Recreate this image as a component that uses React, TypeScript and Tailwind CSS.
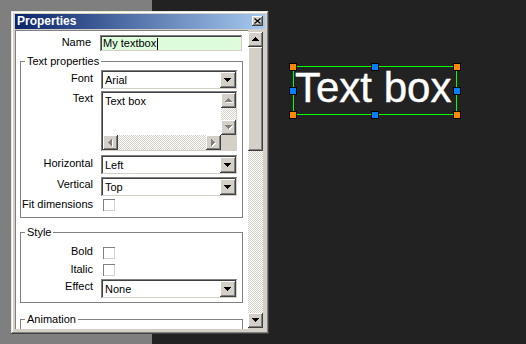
import React from "react";

const raised =
  "bg-[#d4d0c8] shadow-[inset_-1px_-1px_#404040,inset_1px_1px_#ffffff,inset_-2px_-2px_#808080,inset_2px_2px_#d4d0c8]";
const sunken =
  "shadow-[inset_-1px_-1px_#ffffff,inset_1px_1px_#808080,inset_-2px_-2px_#d4d0c8,inset_2px_2px_#404040]";
const checker =
  "[background-image:conic-gradient(#d4d0c8_25%,#ffffff_0_50%,#d4d0c8_0_75%,#ffffff_0)] [background-size:2px_2px]";

type Dir = "up" | "down" | "left" | "right";

function Arrow({ dir, disabled }: { dir: Dir; disabled?: boolean }) {
  const vertical = dir === "up" || dir === "down";
  const w = vertical ? 7 : 4;
  const h = vertical ? 4 : 7;
  const rects = (ox: number, oy: number, fill: string, k: string) =>
    [0, 1, 2, 3].map((i) => {
      if (dir === "down")
        return <rect key={k + i} x={ox + i} y={oy + i} width={7 - 2 * i} height={1} fill={fill} />;
      if (dir === "up")
        return <rect key={k + i} x={ox + 3 - i} y={oy + i} width={1 + 2 * i} height={1} fill={fill} />;
      if (dir === "right")
        return <rect key={k + i} x={ox + i} y={oy + i} width={1} height={7 - 2 * i} fill={fill} />;
      return <rect key={k + i} x={ox + i} y={oy + 3 - i} width={1} height={1 + 2 * i} fill={fill} />;
    });
  return (
    <svg width={w + 1} height={h + 1} shapeRendering="crispEdges" className="block">
      {disabled && rects(1, 1, "#ffffff", "s")}
      {rects(0, 0, disabled ? "#808080" : "#000000", "m")}
    </svg>
  );
}

function ScrollBtn({ dir, disabled, className = "" }: { dir: Dir; disabled?: boolean; className?: string }) {
  return (
    <div className={`flex h-[15px] w-[15px] shrink-0 items-center justify-center ${raised} ${className}`}>
      <Arrow dir={dir} disabled={disabled} />
    </div>
  );
}

function Select({ value }: { value: string }) {
  return (
    <div className={`flex h-[20px] w-[137px] items-center bg-white p-[2px] ${sunken}`}>
      <span className="flex-1 pl-[2px] leading-[13px]">{value}</span>
      <div className={`flex h-[16px] w-[16px] items-center justify-center ${raised}`}>
        <Arrow dir="down" />
      </div>
    </div>
  );
}

function Check() {
  return (
    <div className="h-[12px] w-[12px] bg-white shadow-[inset_1px_1px_#808080,inset_-1px_-1px_#d4d0c8]" />
  );
}

function Handle({ className }: { className: string }) {
  return <div className={`absolute h-[8px] w-[8px] border border-black ${className}`} />;
}

export default function App() {
  return (
    <div className="flex h-[344px] w-[526px] items-start overflow-hidden bg-[linear-gradient(to_right,#7f7f7f_152px,#222222_152px)] font-['Liberation_Sans',Arial,sans-serif] text-[11px] text-black">
      {/* Properties window */}
      <div
        className={`ml-[11px] mt-[11px] flex h-[323px] w-[258px] shrink-0 flex-col bg-[#d4d0c8] px-[4px] pt-[3px] shadow-[inset_-1px_-1px_#404040,inset_1px_1px_#e8e6e0,inset_-2px_-2px_#808080,inset_2px_2px_#ffffff]`}
      >
        {/* Title bar */}
        <div className="flex h-[15px] items-start bg-[linear-gradient(to_right,#0a246a,#a6caf0)]">
          <span className="pl-[2px] text-[12px] font-bold leading-[15px] text-white">Properties</span>
          <div className={`ml-auto mr-[2px] mt-[2px] flex h-[10px] w-[11px] items-center justify-center ${raised}`}>
            <svg width="7" height="6" className="block">
              <path d="M0.5 0.5 L6.5 5.5 M6.5 0.5 L0.5 5.5" stroke="#000" strokeWidth="1.2" fill="none" />
            </svg>
          </div>
        </div>

        {/* Body */}
        <div className="mt-[1px] flex h-[299px]">
          <div className="flex h-[299px] w-[233px] shrink-0 flex-col overflow-hidden border-l border-t border-[#808080] bg-white">
            {/* Name */}
            <div className="mt-[4px] flex items-start">
              <div className="w-[75px] pt-[1px] text-right leading-[13px]">Name</div>
              <div className={`ml-[9px] flex h-[17px] w-[143px] items-center bg-[#dcfcdc] pl-[3px] ${sunken}`}>
                <span className="leading-[13px]">My textbox</span>
                <span className="ml-[1px] h-[12px] w-[1px] bg-black" />
              </div>
            </div>

            {/* Text properties */}
            <fieldset className="ml-[4px] mt-[3px] h-[163px] w-[223px] shrink-0 border border-[#808080]">
              <legend className="ml-[4px] px-[2px] leading-[12px]">Text properties</legend>
              <div className="flex flex-col">
                <div className="mt-[3px] flex items-start">
                  <div className="w-[72px] pt-[2px] text-right leading-[13px]">Font</div>
                  <div className="ml-[8px]">
                    <Select value="Arial" />
                  </div>
                </div>
                <div className="mt-[1px] flex items-start">
                  <div className="w-[72px] pt-[1px] text-right leading-[13px]">Text</div>
                  <div className={`ml-[8px] flex h-[61px] w-[137px] flex-col bg-white p-[2px] ${sunken}`}>
                    <div className="flex flex-1">
                      <div className="flex-1 pl-[2px] pt-[2px] leading-[13px]">Text box</div>
                      <div className="flex w-[15px] flex-col">
                        <ScrollBtn dir="up" disabled />
                        <div className={`flex-1 ${checker}`} />
                        <ScrollBtn dir="down" disabled />
                      </div>
                    </div>
                    <div className="flex h-[15px]">
                      <ScrollBtn dir="left" disabled />
                      <div className={`flex-1 ${checker}`} />
                      <ScrollBtn dir="right" disabled />
                      <div className="h-[15px] w-[15px] bg-[#d4d0c8]" />
                    </div>
                  </div>
                </div>
                <div className="mt-[3px] flex items-start">
                  <div className="w-[72px] pt-[2px] text-right leading-[13px]">Horizontal</div>
                  <div className="ml-[8px]">
                    <Select value="Left" />
                  </div>
                </div>
                <div className="mt-[2px] flex items-start">
                  <div className="w-[72px] pt-[1px] text-right leading-[13px]">Vertical</div>
                  <div className="ml-[8px]">
                    <Select value="Top" />
                  </div>
                </div>
                <div className="mt-[1px] flex items-start">
                  <div className="w-[72px] whitespace-nowrap text-right leading-[13px]">Fit dimensions</div>
                  <div className="ml-[10px] mt-[1px]">
                    <Check />
                  </div>
                </div>
              </div>
            </fieldset>

            {/* Style */}
            <fieldset className="ml-[4px] mt-[8px] h-[77px] w-[223px] shrink-0 border border-[#808080]">
              <legend className="ml-[4px] px-[2px] leading-[12px]">Style</legend>
              <div className="flex flex-col">
                <div className="mt-[7px] flex items-start">
                  <div className="w-[72px] text-right leading-[13px]">Bold</div>
                  <div className="ml-[10px] mt-[2px]">
                    <Check />
                  </div>
                </div>
                <div className="mt-[4px] flex items-start">
                  <div className="w-[72px] text-right leading-[13px]">Italic</div>
                  <div className="ml-[10px] mt-[1px]">
                    <Check />
                  </div>
                </div>
                <div className="mt-[3px] flex items-start">
                  <div className="w-[72px] pt-[1px] text-right leading-[13px]">Effect</div>
                  <div className="ml-[8px]">
                    <Select value="None" />
                  </div>
                </div>
              </div>
            </fieldset>

            {/* Animation */}
            <fieldset className="ml-[4px] mt-[10px] h-[40px] w-[223px] shrink-0 border border-[#808080]">
              <legend className="ml-[4px] px-[2px] leading-[12px]">Animation</legend>
            </fieldset>
          </div>

          {/* Main scrollbar */}
          <div className="flex w-[15px] flex-col pb-[1px] pt-[2px]">
            <ScrollBtn dir="up" />
            <div className={`h-[104px] w-[15px] shrink-0 ${raised}`} />
            <div className={`flex-1 ${checker}`} />
            <ScrollBtn dir="down" />
          </div>
        </div>
      </div>

      {/* Canvas text box */}
      <div className="relative ml-[24px] mt-[66px] h-[49px] w-[164px] shrink-0 border border-[#00ff00]">
        <div className="whitespace-nowrap pl-[1px] pt-[0px] font-['Liberation_Sans',Arial,sans-serif] text-[42px] leading-[42px] text-white [-webkit-text-stroke:0.4px_white]">
          Text box
        </div>
        <Handle className="left-[-5px] top-[-4px] bg-[#ff8800]" />
        <Handle className="left-[77px] top-[-4px] bg-[#0080ff]" />
        <Handle className="left-[159px] top-[-4px] bg-[#ff8800]" />
        <Handle className="left-[-5px] top-[20px] bg-[#0080ff]" />
        <Handle className="left-[159px] top-[20px] bg-[#0080ff]" />
        <Handle className="left-[-5px] top-[44px] bg-[#ff8800]" />
        <Handle className="left-[77px] top-[44px] bg-[#0080ff]" />
        <Handle className="left-[159px] top-[44px] bg-[#ff8800]" />
      </div>
    </div>
  );
}
